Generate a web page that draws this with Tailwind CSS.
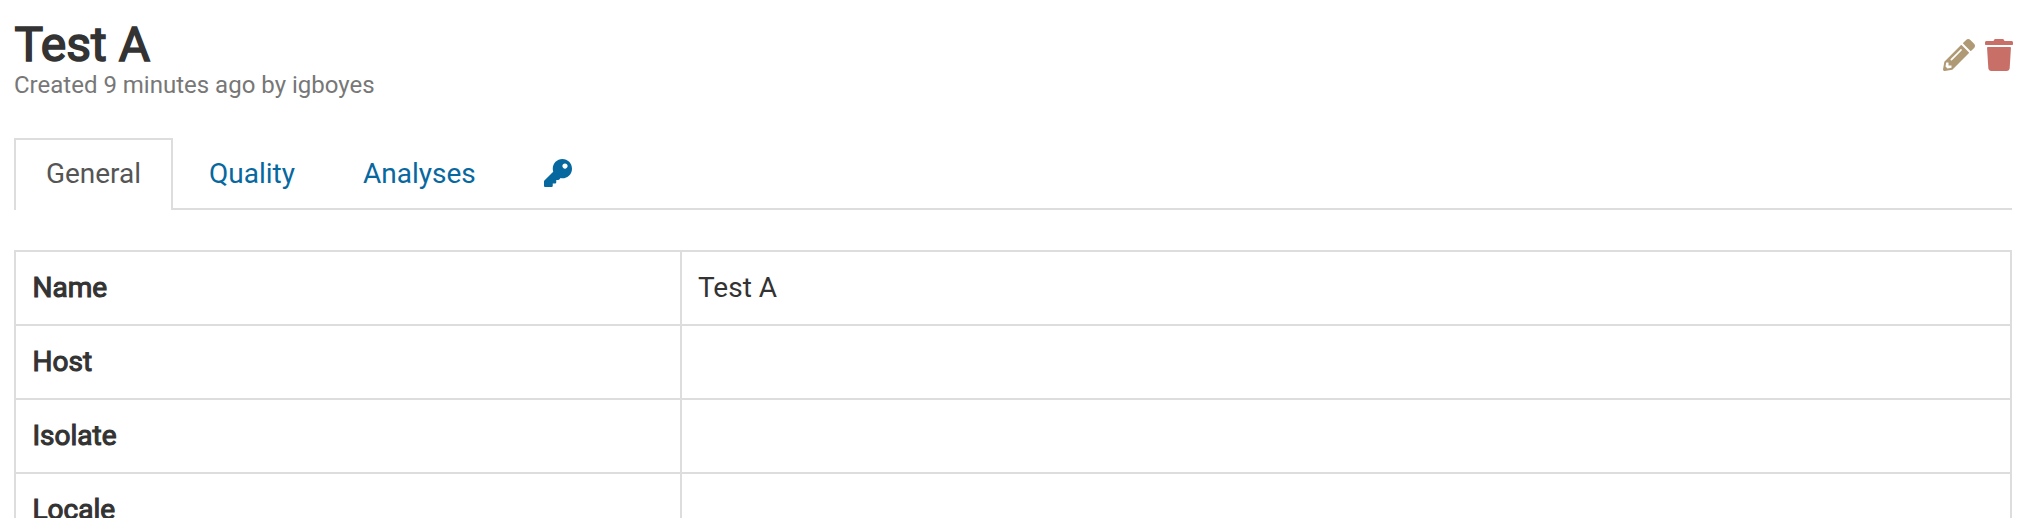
<!DOCTYPE html>
<html lang="en">
<head>
<meta charset="utf-8">
<title>Test A</title>
<script src="https://cdn.jsdelivr.net/npm/@tailwindcss/browser@4"></script>
</head>
<body class="bg-white font-['Roboto',sans-serif] text-[28px] leading-10 text-[#333] overflow-hidden">
<main class="h-[518px] overflow-hidden pl-[14px] pr-7">
  <header class="flex h-[138px] justify-between pt-[18px]">
    <div>
      <h1 class="pl-[0.5px] text-[48px] leading-[54px] [-webkit-text-stroke:1.6px_#333]">Test A</h1>
      <p class="-mt-px text-[24px] leading-7 text-[#777]">Created 9 minutes ago by igboyes</p>
    </div>
    <div class="-mr-[0.5px] flex gap-[9.5px] pt-[21px]">
      <svg class="size-8" viewBox="0 0 512 512" fill="#b09a76"><path d="M497.9 142.1l-46.1 46.1c-4.7 4.7-12.3 4.7-17 0l-111-111c-4.7-4.7-4.7-12.3 0-17l46.1-46.1c18.7-18.7 49.1-18.7 67.9 0l60.1 60.1c18.8 18.7 18.8 49.1 0 67.9zM284.2 99.8L21.6 362.4.4 483.9c-2.9 16.4 11.4 30.6 27.8 27.8l121.5-21.3 262.6-262.6c4.7-4.7 4.7-12.3 0-17l-111-111c-4.8-4.7-12.4-4.7-17.1 0zM124.1 339.9c-5.5-5.5-5.5-14.3 0-19.8l154-154c5.5-5.5 14.3-5.5 19.8 0s5.5 14.3 0 19.8l-154 154c-5.5 5.5-14.3 5.5-19.8 0zM88 424h48v36.3l-64.5 11.3-31.1-31.1L51.7 376H88v48z"/></svg>
      <svg class="h-8 w-7" viewBox="0 0 448 512" fill="#c87068"><path d="M0 84V56c0-13.3 10.7-24 24-24h112l9.4-18.7c4-8.2 12.3-13.3 21.4-13.3h114.3c9.1 0 17.4 5.1 21.5 13.3L312 32h112c13.3 0 24 10.7 24 24v28c0 6.6-5.4 12-12 12H12C5.4 96 0 90.6 0 84zm415.2 56.7L394.8 467c-1.6 25.3-22.6 45-47.9 45H101.1c-25.3 0-46.3-19.7-47.9-45L32.8 140.7c-.4-6.9 5.1-12.7 12-12.7h358.5c6.8 0 12.3 5.8 11.9 12.7z"/></svg>
    </div>
  </header>
  <nav class="flex h-[72px] text-[#07689f]">
    <a class="flex w-[159px] items-center justify-center border-2 border-b-0 border-[#ddd] pb-0.5 text-[#555]">General</a>
    <div class="flex grow items-center gap-[68px] border-b-2 border-[#ddd] pt-0.5 pl-9">
      <a>Quality</a>
      <a>Analyses</a>
      <a class="pb-0.5"><svg class="size-7" viewBox="0 0 512 512" fill="currentColor"><path d="M512 176.001C512 273.203 433.202 352 336 352c-11.22 0-22.19-1.062-32.827-3.069l-24.012 27.014A23.999 23.999 0 0 1 261.223 384H224v40c0 13.255-10.745 24-24 24h-40v40c0 13.255-10.745 24-24 24H24c-13.255 0-24-10.745-24-24v-78.059c0-6.365 2.529-12.47 7.029-16.971l161.802-161.802C163.108 213.814 160 195.271 160 176 160 78.798 238.797.001 335.999 0 433.488-.001 512 78.511 512 176.001zM336 128c0 26.51 21.49 48 48 48s48-21.49 48-48-21.49-48-48-48-48 21.49-48 48z"/></svg></a>
    </div>
  </nav>
  <div class="mt-10 border-2 border-b-0 border-[#ddd]">
    <div class="grid h-[74px] grid-cols-[666px_1fr] border-b-2 border-[#ddd]">
      <div class="border-r-2 border-[#ddd] py-4 pl-[16.5px] [-webkit-text-stroke:1.1px_#333]">Name</div>
      <div class="px-4 py-4">Test A</div>
    </div>
    <div class="grid h-[74px] grid-cols-[666px_1fr] border-b-2 border-[#ddd]">
      <div class="border-r-2 border-[#ddd] py-4 pl-[16.5px] [-webkit-text-stroke:1.1px_#333]">Host</div>
      <div></div>
    </div>
    <div class="grid h-[74px] grid-cols-[666px_1fr] border-b-2 border-[#ddd]">
      <div class="border-r-2 border-[#ddd] py-4 pl-[16.5px] [-webkit-text-stroke:1.1px_#333]">Isolate</div>
      <div></div>
    </div>
    <div class="grid h-[74px] grid-cols-[666px_1fr] border-b-2 border-[#ddd]">
      <div class="border-r-2 border-[#ddd] py-4 pl-[16.5px] [-webkit-text-stroke:1.1px_#333]">Locale</div>
      <div></div>
    </div>
  </div>
</main>
</body>
</html>
